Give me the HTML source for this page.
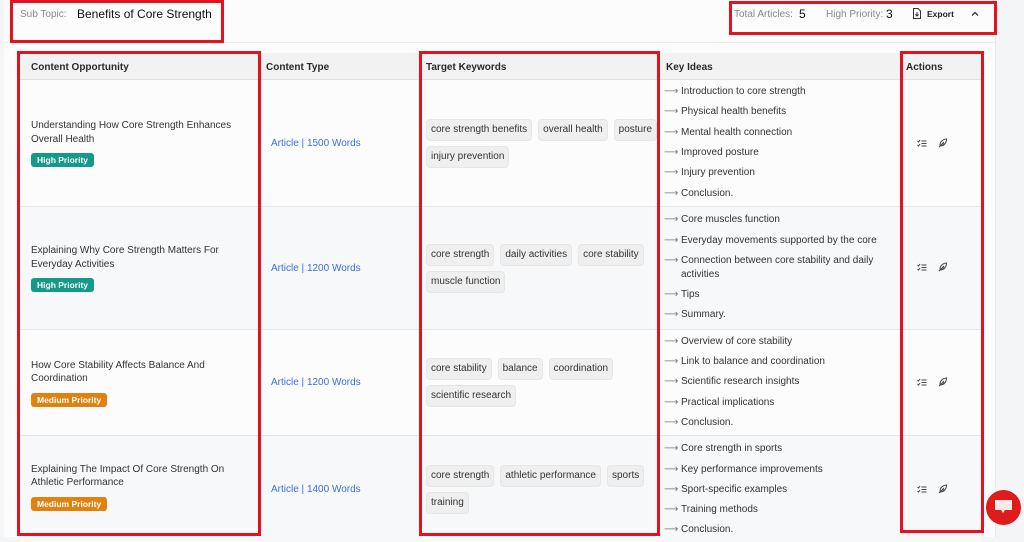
<!DOCTYPE html>
<html><head><meta charset="utf-8"><style>
*{box-sizing:border-box;margin:0;padding:0}
body{width:1024px;height:537px;overflow:hidden;background:#f4f5f6;font-family:"Liberation Sans",sans-serif;position:relative;color:#333}
.card{position:absolute;left:4px;top:0;width:992px;height:537px;background:#fcfcfc;border-right:1px solid #e8e8e8}
.abs{position:absolute}
.hdr{position:absolute;left:20px;top:53px;width:962px;height:27px;background:#f2f2f3;border-bottom:1px solid #e2e2e2;font-weight:bold;font-size:10px;color:#2a2a2a}
.hdr span{position:absolute;top:9px}
.row{position:absolute;left:20px;width:962px;border-bottom:1px solid #e6e6e6}
.cell{position:absolute;top:0;height:100%;display:flex;flex-direction:column;justify-content:center}
.title{font-size:10px;line-height:13.5px;color:#333;width:205px}
.badge{display:inline-block;margin-top:7px;height:14px;line-height:14px;padding:0 6px;border-radius:3px;color:#fff;font-size:8.5px;font-weight:bold;align-self:flex-start}
.hi{background:#139a89}.med{background:#e0820f}
.ct{font-size:10px;color:#3a6fe0}
.chips{display:flex;flex-wrap:wrap;gap:5px 6px;width:238px}
.chip{background:#efefef;border:1px solid #e6e6e6;border-radius:4px;height:22px;line-height:20px;padding:0 4px;font-size:10px;color:#333}
.ideas div{font-size:10px;line-height:20.3px;color:#333;padding-left:16px;position:relative}
.ideas div:before{content:"\27F6";position:absolute;left:-1px;top:0;font-family:"DejaVu Sans",sans-serif;font-size:10px;color:#777}
.ideas div.w{line-height:14px;padding-top:3px;padding-bottom:3px}
.ideas div.w:before{top:3px}
.red{position:absolute;border:3px solid #e3121f}
</style></head><body>
<div class="card"></div>
<div class="abs" style="left:20px;top:9px;font-size:10px;color:#888">Sub Topic:</div>
<div class="abs" style="left:77px;top:7px;font-size:12px;color:#111">Benefits of Core Strength</div>
<div class="abs" style="left:734px;top:9px;font-size:10px;color:#888">Total Articles:</div>
<div class="abs" style="left:799px;top:7px;font-size:12px;color:#111">5</div>
<div class="abs" style="left:826px;top:9px;font-size:10px;color:#888">High Priority:</div>
<div class="abs" style="left:886px;top:7px;font-size:12px;color:#111">3</div>
<svg class="abs" style="left:912px;top:8px" width="10" height="11" viewBox="0 0 10 11"><path d="M1.5 .5h4.5l2.5 2.5v7.5h-7z" fill="none" stroke="#333"/><path d="M5 4v4M3.3 6.3L5 8l1.7-1.7" fill="none" stroke="#333"/></svg>
<div class="abs" style="left:927px;top:9px;font-size:8.5px;font-weight:bold;color:#222">Export</div>
<svg class="abs" style="left:971px;top:11px" width="8" height="6"><path d="M1 4.5L4 1.5 7 4.5" fill="none" stroke="#333" stroke-width="1.3"/></svg>
<div class="abs" style="left:4px;top:42px;width:992px;border-top:1px solid #ececec"></div>

<div class="hdr"><span style="left:11px">Content Opportunity</span><span style="left:246px">Content Type</span><span style="left:406px">Target Keywords</span><span style="left:646px">Key Ideas</span><span style="left:886px">Actions</span></div>

<div class="row" style="top:80px;height:127px;background:#fcfcfc">
<div class="cell" style="left:11px;width:220px"><div class="title">Understanding How Core Strength Enhances Overall Health</div><span class="badge hi">High Priority</span></div>
<div class="cell" style="left:251px"><div class="ct">Article | 1500 Words</div></div>
<div class="cell" style="left:406px"><div class="chips"><span class="chip">core strength benefits</span><span class="chip">overall health</span><span class="chip">posture</span><span class="chip">injury prevention</span></div></div>
<div class="cell ideas" style="left:645px;width:235px"><div>Introduction to core strength</div><div>Physical health benefits</div><div>Mental health connection</div><div>Improved posture</div><div>Injury prevention</div><div>Conclusion.</div></div>
</div>
<div class="row" style="top:207px;height:123px;background:#f7f8f9">
<div class="cell" style="left:11px;width:220px"><div class="title">Explaining Why Core Strength Matters For Everyday Activities</div><span class="badge hi">High Priority</span></div>
<div class="cell" style="left:251px"><div class="ct">Article | 1200 Words</div></div>
<div class="cell" style="left:406px"><div class="chips"><span class="chip">core strength</span><span class="chip">daily activities</span><span class="chip">core stability</span><span class="chip">muscle function</span></div></div>
<div class="cell ideas" style="left:645px;width:235px"><div>Core muscles function</div><div>Everyday movements supported by the core</div><div class="w">Connection between core stability and daily activities</div><div>Tips</div><div>Summary.</div></div>
</div>
<div class="row" style="top:330px;height:106px;background:#fcfcfc">
<div class="cell" style="left:11px;width:220px"><div class="title">How Core Stability Affects Balance And Coordination</div><span class="badge med">Medium Priority</span></div>
<div class="cell" style="left:251px"><div class="ct">Article | 1200 Words</div></div>
<div class="cell" style="left:406px"><div class="chips"><span class="chip">core stability</span><span class="chip">balance</span><span class="chip">coordination</span><span class="chip">scientific research</span></div></div>
<div class="cell ideas" style="left:645px;width:235px"><div>Overview of core stability</div><div>Link to balance and coordination</div><div>Scientific research insights</div><div>Practical implications</div><div>Conclusion.</div></div>
</div>
<div class="row" style="top:436px;height:106px;background:#f7f8f9;border:none">
<div class="cell" style="left:11px;width:220px;padding-bottom:5px"><div class="title">Explaining The Impact Of Core Strength On Athletic Performance</div><span class="badge med">Medium Priority</span></div>
<div class="cell" style="left:251px"><div class="ct">Article | 1400 Words</div></div>
<div class="cell" style="left:406px"><div class="chips"><span class="chip">core strength</span><span class="chip">athletic performance</span><span class="chip">sports</span><span class="chip">training</span></div></div>
<div class="cell ideas" style="left:645px;width:235px;padding-top:2px"><div>Core strength in sports</div><div>Key performance improvements</div><div>Sport-specific examples</div><div>Training methods</div><div>Conclusion.</div></div>
</div>
<div class="abs" style="left:260px;top:53px;height:484px;border-left:1px solid #e6e6e6"></div>
<div class="abs" style="left:659px;top:53px;height:484px;border-left:1px solid #e6e6e6"></div>
<div class="abs" style="left:982px;top:53px;height:484px;border-left:1px solid #e6e6e6"></div>

<svg width="0" height="0" style="position:absolute"><defs>
<g id="a1"><path d="M.5 2l1 1 1.6-2M.5 6l1 1 1.6-2M4.5 2h5M4.5 4.5h5M4.5 7h5" fill="none" stroke="#444" stroke-width="1"/></g>
<g id="a2"><path d="M1 9L6 4M2.2 8C1.5 5 3.5 1.5 8.5 1 8.5 5 6 8 2.2 8zM4 6h2.5" fill="none" stroke="#444" stroke-width="1"/></g>
</defs></svg>
<svg class="abs" style="left:917px;top:139px" width="10" height="9"><use href="#a1"/></svg><svg class="abs" style="left:938px;top:138px" width="10" height="10"><use href="#a2"/></svg>
<svg class="abs" style="left:917px;top:263px" width="10" height="9"><use href="#a1"/></svg><svg class="abs" style="left:938px;top:262px" width="10" height="10"><use href="#a2"/></svg>
<svg class="abs" style="left:917px;top:378px" width="10" height="9"><use href="#a1"/></svg><svg class="abs" style="left:938px;top:377px" width="10" height="10"><use href="#a2"/></svg>
<svg class="abs" style="left:917px;top:485px" width="10" height="9"><use href="#a1"/></svg><svg class="abs" style="left:938px;top:484px" width="10" height="10"><use href="#a2"/></svg>

<div class="abs" style="left:986px;top:490px;width:35px;height:35px;border-radius:50%;background:#e01b1b"></div>
<svg class="abs" style="left:994px;top:499px" width="20" height="16"><path d="M1 1h17v10h-7l-2 3-2-3H1z" fill="#fde8e8"/></svg>

<div class="red" style="left:10px;top:0;width:214px;height:43px"></div>
<div class="red" style="left:729px;top:1px;width:268px;height:34px"></div>
<div class="red" style="left:17px;top:51px;width:244px;height:485px"></div>
<div class="red" style="left:419px;top:51px;width:241px;height:485px"></div>
<div class="red" style="left:900px;top:51px;width:84px;height:482px"></div>
</body></html>
